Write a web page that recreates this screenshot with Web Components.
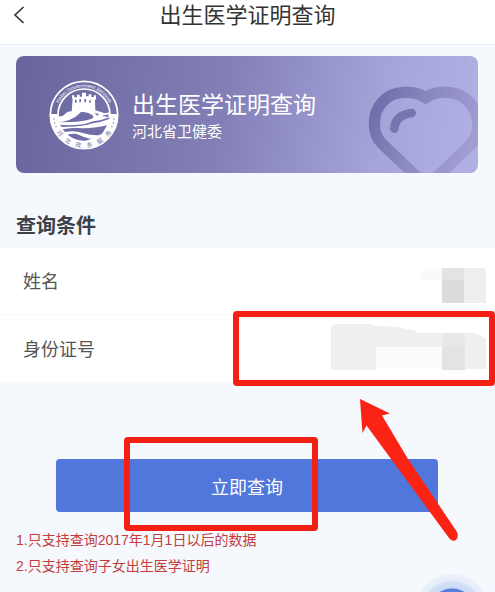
<!DOCTYPE html>
<html lang="zh-CN">
<head>
<meta charset="utf-8">
<meta name="viewport" content="width=device-width, initial-scale=1">
<title>出生医学证明查询</title>
<style>
  body {
    margin: 0;
    min-height: 100vh;
    background: #f5f9fd;
    color: #333;
    font-family: "Liberation Sans", "Noto Sans CJK SC", sans-serif;
  }
</style>
</head>
<body>
<query-page></query-page>

<script>
class NavBar extends HTMLElement {
  constructor() {
    super();
    this.attachShadow({mode: "open"}).innerHTML = `
      <style>
        :host {
          display: grid;
          grid-template-columns: 40px 1fr 40px;
          height: 44px;
          background: white;
          border-bottom: 1px solid #e9eff3;
        }
        button {
          height: 30px;
          padding: 0 0 0 13px;
          border: none;
          background: none;
          display: flex;
          align-items: center;
        }
        h1 {
          margin: 0;
          font-size: 22px;
          line-height: 32px;
          font-weight: 400;
          text-align: center;
          color: #333;
        }
      </style>
      <button type="button" aria-label="返回">
        <svg width="12" height="18" viewBox="0 0 12 18" fill="none" stroke="#333" stroke-width="1.6"><path d="M10.500 1L2 9l8.500 8"/></svg>
      </button>
      <h1><slot></slot></h1>
    `;
  }
}

class ServiceEmblem extends HTMLElement {
  constructor() {
    super();
    this.attachShadow({mode: "open"}).innerHTML = `
      <style>
        :host { display: block; width: 70px; height: 70px; }
        svg { display: block; }
      </style>
      <svg width="70" height="70" viewBox="0 0 210 210">
        <defs>
          <path id="top" d="M22 105a83 83 0 0 1 166 0"/>
          <path id="low" d="M7 105a98 98 0 0 0 196 0"/>
          <clipPath id="disc"><circle cx="105" cy="105" r="77"/></clipPath>
        </defs>
        <circle cx="105" cy="105" r="101" fill="none" stroke="white" stroke-width="5"/>
        <path d="M2 102h24a79 79 0 0 0 158 0h24a103 103 0 0 1-206 0z" fill="white"/>
        <circle cx="105" cy="105" r="78" fill="none" stroke="white" stroke-width="5"/>
        <g clip-path="url(#disc)">
          <path fill="white" d="M20 112l22-5 14-12 12-1 3-38-2-1V46h7v6h8v-8h8v6h7V38h12v11h8v-6h8v8h8v-5h6v11l-3 3 1 31 15 4 13 5 16-3 14 10v16l-22 8-50 10-92-2z"/>
          <path fill="#706eaa" d="M78 59h5v9h-5zM91 57h5v10h-5zM106 57h5v10h-5zM121 60h4v9h-4z"/>
          <path fill="#706eaa" d="M30 127q32-5 50-17l16-14q18-2 34 9 8 8-4 12-25 8-60 9zM136 98l14 4-5 5zM158 108l20-5v8z"/>
          <path fill="none" stroke="#706eaa" stroke-width="5" d="M26 137q70 4 101-9 32-4 62-17"/>
          <path fill="white" d="M26 140q70 5 160-21v14q-50 13-86 12-36-3-70 8z"/>
          <path fill="#706eaa" d="M30 150q30-8 63-4 40 10 92 4l-6 14q-50 2-82-9-26-8-63 5z"/>
          <path fill="white" d="M34 160q29-10 57-4 39 13 86 10l-12 14q-51-2-74-15-20-9-49 3z"/>
          <path fill="#706eaa" d="M43 169q22-9 42 0 28 16 64 16-64 14-106-16z"/>
        </g>
        <text font-size="15" fill="white" font-family="Liberation Sans"><textPath href="#top" startOffset="50%" text-anchor="middle">Hebei Government Services</textPath></text>
        <text font-size="18" fill="#706eaa" font-family="Noto Sans CJK SC, sans-serif"><textPath href="#low" startOffset="50%" text-anchor="middle">河　北　政　务　服　务</textPath></text>
        <g fill="#706eaa"><circle cx="15" cy="117" r="2"/><circle cx="17" cy="129" r="2"/><circle cx="21" cy="140" r="2"/><circle cx="195" cy="117" r="2"/><circle cx="193" cy="129" r="2"/><circle cx="189" cy="140" r="2"/></g>
      </svg>
    `;
  }
}

class ServiceBanner extends HTMLElement {
  constructor() {
    super();
    this.attachShadow({mode: "open"}).innerHTML = `
      <style>
        :host {
          display: flex;
          align-items: center;
          gap: 13px;
          height: 117px;
          margin: 11px 17px 0 16px;
          padding-left: 33px;
          box-sizing: border-box;
          border-radius: 8px;
          overflow: hidden;
          position: relative;
          color: white;
          background: linear-gradient(100deg, #67659c, #8280b7 45%, #a5a4d9 78%, #b2b1e6);
        }
        .text { padding-top: 4px; }
        h2 { margin: 0; font-size: 23px; line-height: 30px; font-weight: 400; }
        p { margin: 0; font-size: 15px; line-height: 24px; }
        .heart { position: absolute; right: 0; bottom: 0; }
      </style>
      <svg class="heart" width="112" height="91" viewBox="78 95 336 273" fill="none" stroke-linecap="round" aria-hidden="true">
        <defs>
          <linearGradient id="fade" gradientUnits="userSpaceOnUse" x1="100" y1="150" x2="400" y2="280">
            <stop offset="0" stop-color="#6f6daa"/>
            <stop offset=".5" stop-color="#8c8ac2"/>
            <stop offset="1" stop-color="#a09ed3"/>
          </linearGradient>
        </defs>
        <path stroke="url(#fade)" stroke-width="34" d="M257 142C239 130 215 125 190 126C140 128 103 168 103 220C103 246 111 266 128 282L261 408L390 285C404 270 413 246 413 220C411 165 370 126 320 126C297 125 275 130 257 142Z"/>
        <path stroke="#7775b0" stroke-width="26" d="M163 235Q165 195 215 188"/>
      </svg>
      <service-emblem></service-emblem>
      <div class="text">
        <h2><slot name="title"></slot></h2>
        <p><slot></slot></p>
      </div>
    `;
  }
}

class FormRow extends HTMLElement {
  connectedCallback() {
    const label = this.getAttribute("label");
    this.attachShadow({mode: "open"}).innerHTML = `
      <style>
        :host {
          display: flex;
          align-items: center;
          box-sizing: border-box;
          height: 67px;
          padding: 2px 9px 0 23px;
          background: white;
          position: relative;
        }
        :host(:not(:last-of-type)) { border-bottom: 1px solid #f5f9fc; }
        label { font-size: 18px; line-height: 26px; color: #555; }
        input {
          flex: 1;
          min-width: 0;
          height: 40px;
          border: none;
          outline: none;
          background: none;
          font: inherit;
          font-size: 18px;
          text-align: right;
        }
      </style>
      <label for="field">${label}</label>
      <input id="field" type="text">
      <slot></slot>
    `;
  }
}

// Red frame laid over its positioned parent, offsets come from --inset
class MarkFrame extends HTMLElement {
  constructor() {
    super();
    this.attachShadow({mode: "open"}).innerHTML = `
      <style>
        :host {
          display: block;
          position: absolute;
          inset: var(--inset);
          border: 6px solid #f32013;
          border-radius: 4px;
          pointer-events: none;
          z-index: 1;
        }
      </style>
    `;
  }
}

class SubmitButton extends HTMLElement {
  constructor() {
    super();
    this.attachShadow({mode: "open"}).innerHTML = `
      <style>
        :host {
          display: block;
          position: relative;
          margin: 77px 57px 0 56px;
        }
        button {
          display: block;
          width: 100%;
          height: 53px;
          border: none;
          border-radius: 4px;
          background: #5176dc;
          color: white;
          font: inherit;
          font-size: 18px;
        }
        mark-frame { --inset: -22px 120px -19px 68px; }
      </style>
      <button type="submit"><slot></slot></button>
      <mark-frame></mark-frame>
    `;
  }
}

class FloatButton extends HTMLElement {
  constructor() {
    super();
    this.attachShadow({mode: "open"}).innerHTML = `
      <style>
        :host { display: block; position: fixed; right: 5px; bottom: -58px; }
        button {
          display: block;
          width: 76px;
          height: 76px;
          padding: 0;
          border: none;
          border-radius: 50%;
          background: radial-gradient(circle, #5680dc 23px, #c9d9f5 24px, #d5e1f7 30px, #e6eefa 32px, #e9f0fb 37px);
        }
      </style>
      <button type="button" aria-label="客服"></button>
    `;
  }
}

class QueryPage extends HTMLElement {
  constructor() {
    super();
    this.attachShadow({mode: "open"}).innerHTML = `
      <style>
        :host { display: block; }
        main { position: relative; }
        h3 {
          margin: 38px 16px 7px;
          font-size: 20px;
          line-height: 30px;
          font-weight: 700;
          color: #3c4048;
        }
        ol {
          margin: 15px 16px 0;
          padding: 0;
          list-style: none;
          font-size: 14px;
          line-height: 26px;
          color: #c43c3c;
        }
        .mosaic { position: absolute; right: 9px; top: 0; pointer-events: none; }
        .arrow { position: absolute; right: 35px; top: 343px; pointer-events: none; z-index: 2; }
        form-row mark-frame { --inset: -4px 0 -4px 47%; }
      </style>
      <nav-bar>出生医学证明查询</nav-bar>
      <main>
        <service-banner>
          <span slot="title">出生医学证明查询</span>
          河北省卫健委
        </service-banner>
        <h3>查询条件</h3>
        <form>
          <form-row label="姓名">
            <svg class="mosaic" width="66" height="66" viewBox="0 0 66 66" aria-hidden="true">
              <path fill="#fafafa" d="M0 23l8-3h14v12H0z"/>
              <path fill="#e3e3e3" d="M22 20h22v12H22z"/>
              <path fill="#dcdcdc" d="M22 32h22v23H22z"/>
              <path fill="#eee" d="M44 20h20l2 2v33H44z"/>
            </svg>
          </form-row>
          <form-row label="身份证号">
            <svg class="mosaic" width="155" height="66" viewBox="0 0 155 66" aria-hidden="true">
              <path fill="#efefef" d="M0 11l5-2h35l5 2 22 1 18 4 1 2h58l11 5v31h-44V32H45v23H0z"/>
              <path fill="#fbfbfb" d="M45 32h66v22H45z"/>
              <path fill="#e8e8e8" d="M111 18h23v14h-23z"/>
              <path fill="#e3e3e3" d="M111 32h23v23h-23z"/>
            </svg>
            <mark-frame></mark-frame>
          </form-row>
          <submit-button>立即查询</submit-button>
        </form>
        <ol>
          <li>1.只支持查询2017年1月1日以后的数据</li>
          <li>2.只支持查询子女出生医学证明</li>
        </ol>
        <svg class="arrow" width="100" height="143" viewBox="0 0 100 143" aria-hidden="true">
          <path fill="#fa2314" d="M0 0L30 14.500L22 16.500L48 60L97 133Q99 138 96 141Q92 143 89 139L6.500 26.500L2.500 34Z"/>
        </svg>
      </main>
      <float-button></float-button>
    `;
  }
}

customElements.define("nav-bar", NavBar);
customElements.define("service-emblem", ServiceEmblem);
customElements.define("service-banner", ServiceBanner);
customElements.define("form-row", FormRow);
customElements.define("mark-frame", MarkFrame);
customElements.define("submit-button", SubmitButton);
customElements.define("float-button", FloatButton);
customElements.define("query-page", QueryPage);
</script>
</body>
</html>
